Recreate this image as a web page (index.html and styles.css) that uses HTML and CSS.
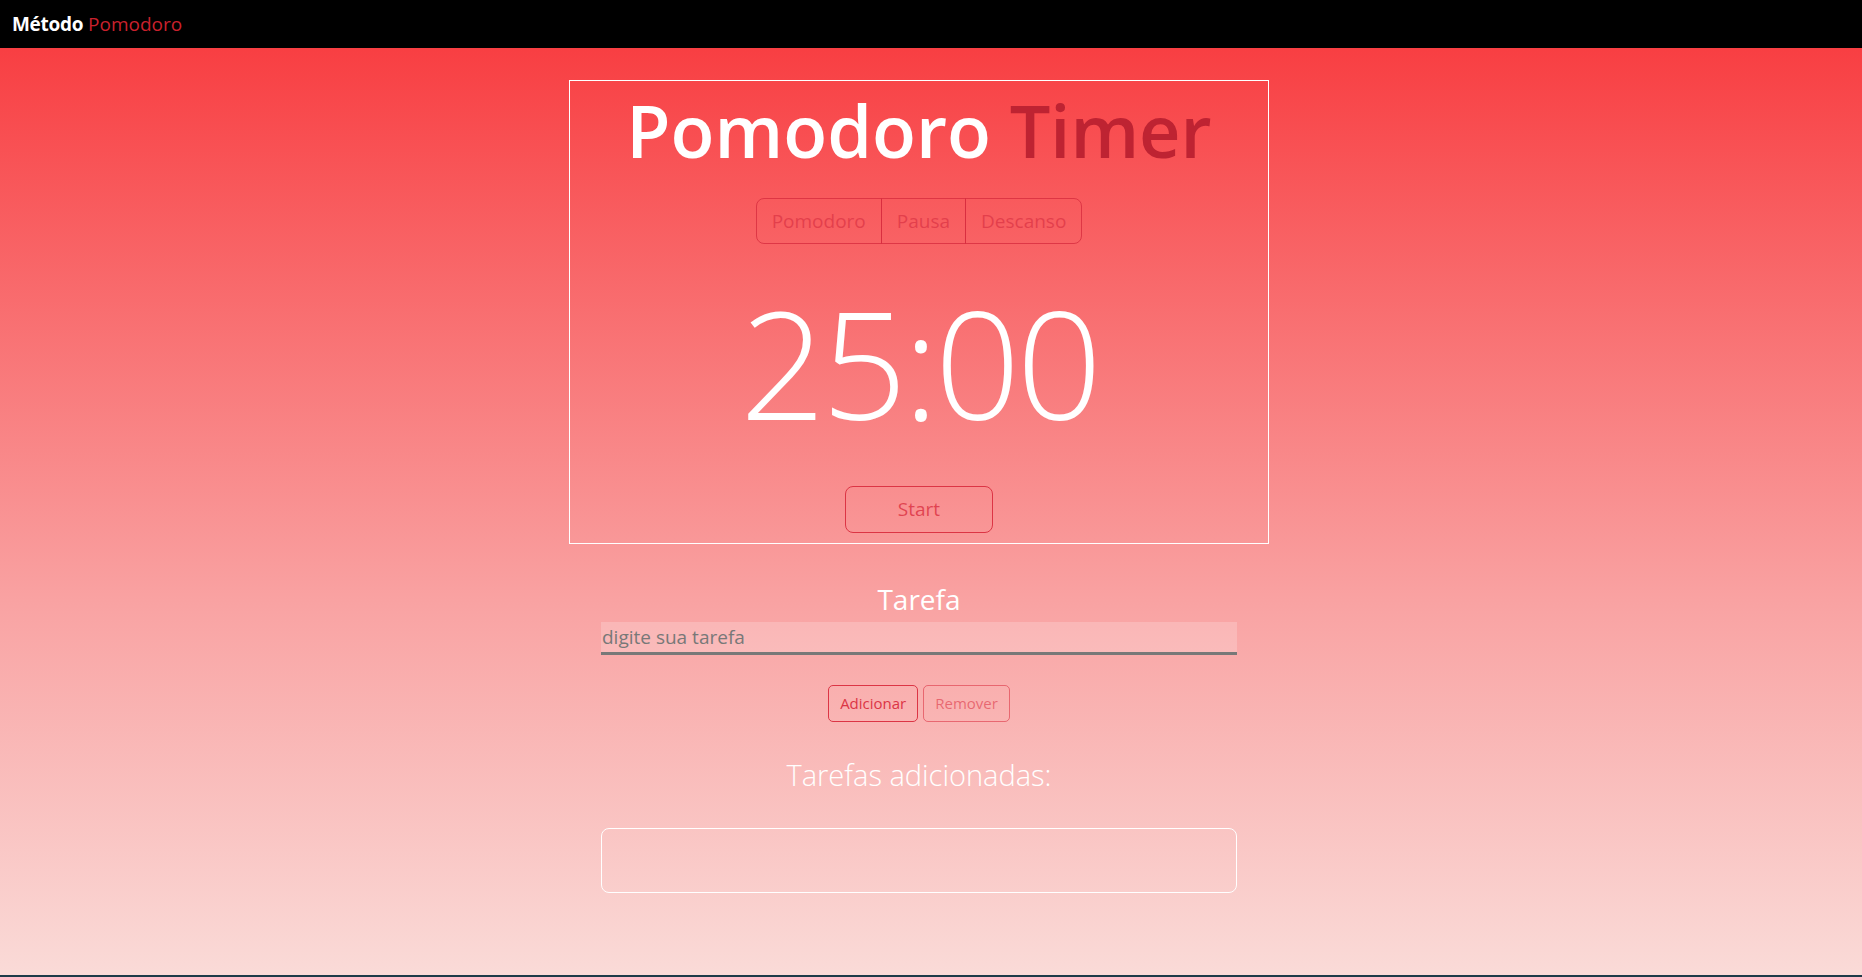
FILE: index.html
```html
<!DOCTYPE html>
<html lang="pt-BR">
<head>
  <meta charset="UTF-8">
  <title>Método Pomodoro</title>
  <link rel="stylesheet" href="styles.css">
</head>
<body>
  <nav class="topbar">
    <span class="brand"><b>Método</b> <span class="brand-red">Pomodoro</span></span>
  </nav>

  <main class="page">
    <section class="timer-card">
      <h1 class="title">Pomodoro <span class="title-red">Timer</span></h1>

      <div class="modes">
        <button class="mode">Pomodoro</button>
        <button class="mode">Pausa</button>
        <button class="mode">Descanso</button>
      </div>

      <div class="clock" id="clock">25:00</div>

      <button class="start" id="startBtn">Start</button>
    </section>

    <section class="tasks">
      <h2 class="tasks-title">Tarefa</h2>
      <input class="task-input" type="text" placeholder="digite sua tarefa">
      <div class="task-actions">
        <button class="btn-add">Adicionar</button>
        <button class="btn-remove">Remover</button>
      </div>

      <h3 class="list-title">Tarefas adicionadas:</h3>
      <ul class="task-list" id="taskList">
        <!-- tarefas entram aqui -->
      </ul>
    </section>
  </main>

  <div class="taskbar"></div>
</body>
</html>
```

FILE: styles.css
```css
html {
  height: 100%;
}

body {
  margin: 0;
  min-height: 100%;
  display: flex;
  flex-direction: column;
  font-family: 'Open Sans', 'Noto Sans', sans-serif;
  background: linear-gradient(180deg, #f8363a 0%, #f9a3a3 62%, #fadbd8 100%);
  color: #fff;
}

.topbar {
  height: 48px;
  background-color: #000;
  display: flex;
  align-items: center;
  padding-left: 12px;
}

.brand {
  font-size: 19px;
  line-height: 28px;
  color: #fff;
}

.brand b {
  font-weight: 700;
  letter-spacing: -0.3px;
}

.brand-red {
  color: #c9212d;
}

.page {
  display: flex;
  flex-direction: column;
  align-items: center;
  padding-right: 24px;
}

.timer-card {
  box-sizing: border-box;
  width: 700px;
  margin-top: 32px;
  border: 1px solid #fff;
  display: flex;
  flex-direction: column;
  align-items: center;
  padding-bottom: 10px;
}

.title {
  margin: 5px 0 0;
  font-size: 72px;
  line-height: 88px;
  font-weight: 600;
  color: #fff;
}

.title-red {
  color: #be2332;
}

.modes {
  display: flex;
  margin-top: 24px;
}

.mode {
  font-family: inherit;
  font-size: 19px;
  line-height: 28px;
  padding: 8px 15px;
  background: transparent;
  color: rgba(220, 53, 69, 0.75);
  border: 1px solid rgba(215, 45, 62, 0.8);
  margin-left: -1px;
  cursor: pointer;
}

.mode:first-child {
  margin-left: 0;
  border-radius: 8px 0 0 8px;
}

.mode:last-child {
  border-radius: 0 8px 8px 0;
}

.clock {
  margin-top: 43px;
  font-size: 150px;
  line-height: 150px;
  font-weight: 300;
  letter-spacing: -4px;
  color: #fff;
}

.start {
  margin-top: 49px;
  font-family: inherit;
  font-size: 19px;
  line-height: 29px;
  padding: 8px 52px;
  background: transparent;
  color: rgba(220, 53, 69, 0.85);
  border: 1px solid #dc3545;
  border-radius: 8px;
  cursor: pointer;
}

.tasks {
  width: 636px;
  display: flex;
  flex-direction: column;
  align-items: center;
}

.tasks-title {
  margin: 38px 0 0;
  font-size: 28px;
  line-height: 34px;
  font-weight: 400;
}

.task-input {
  box-sizing: border-box;
  width: 100%;
  height: 33px;
  margin-top: 6px;
  padding: 0 1px;
  border: none;
  border-bottom: 3px solid #787878;
  background-color: rgba(255, 255, 255, 0.2);
  font-family: inherit;
  font-size: 19px;
  color: #555;
  outline: none;
}

.task-input::placeholder {
  color: #787878;
}

.task-actions {
  display: flex;
  gap: 5px;
  margin-top: 30px;
}

.btn-add,
.btn-remove {
  font-family: inherit;
  font-size: 15px;
  line-height: 23px;
  padding: 6px 11px;
  background: transparent;
  border-radius: 5px;
  cursor: pointer;
}

.btn-add {
  color: #dc3545;
  border: 1px solid #dc3545;
}

.btn-remove {
  color: rgba(220, 53, 69, 0.6);
  border: 1px solid rgba(220, 53, 69, 0.6);
}

.list-title {
  margin: 36px 0 0;
  font-size: 29px;
  line-height: 34px;
  font-weight: 300;
}

.task-list {
  box-sizing: border-box;
  width: 100%;
  height: 65px;
  margin: 36px 0 0;
  padding: 0;
  list-style: none;
  border: 1px solid #fff;
  border-radius: 8px;
}

.taskbar {
  margin-top: auto;
  height: 2px;
  background-color: #1d3a48;
}
```
